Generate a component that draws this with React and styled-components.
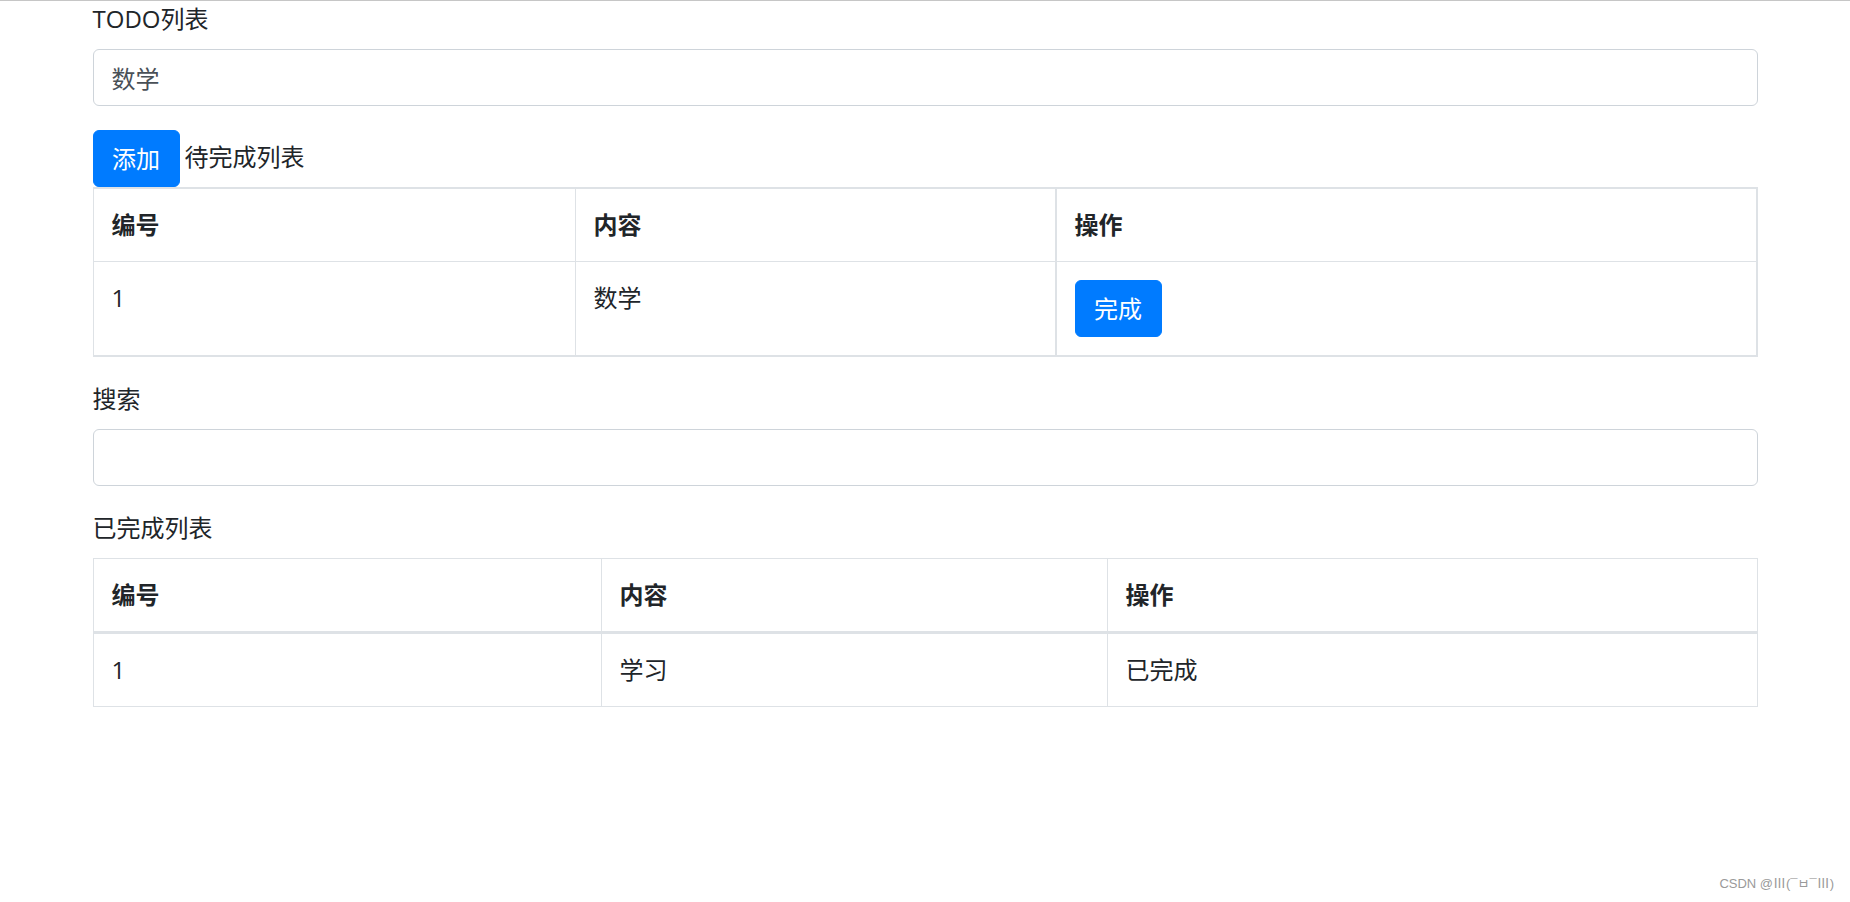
import React, { useState } from "react";
import styled, { createGlobalStyle } from "styled-components";

const GlobalStyle = createGlobalStyle`
  * { box-sizing: border-box; }
  html, body { margin: 0; padding: 0; background: #fff; }
  body {
    font-family: "Open Sans", "Noto Sans CJK SC", sans-serif;
    font-size: 24px;
    line-height: 36px;
    color: #212529;
  }
`;

const Page = styled.div`
  position: relative;
  min-height: 100vh;
  border-top: 1px solid #c6c6c6;
`;

const Container = styled.div`
  width: 1665px;
  margin: 0 auto;
`;

const Label = styled.div`
  display: block;
  margin-bottom: 12px;
  line-height: 36px;
`;

const FormGroup = styled.div`
  margin-bottom: 24px;
`;

const Input = styled.input`
  display: block;
  width: 100%;
  height: 57px;
  padding: 9px 18px;
  font-family: inherit;
  font-size: 24px;
  line-height: 36px;
  color: #495057;
  background: #fff;
  border: 1px solid #ced4da;
  border-radius: 6px;
  outline: none;
`;

const ActionRow = styled.div`
  display: flex;
  align-items: center;
  gap: 5px;
`;

const Button = styled.button`
  display: inline-block;
  height: 57px;
  padding: 0 18.5px;
  font-family: inherit;
  font-size: 24px;
  line-height: 36px;
  color: #fff;
  background: #007bff;
  border: 1px solid #007bff;
  border-radius: 6px;
  cursor: pointer;
`;

const RowTitle = styled.span`
  line-height: 36px;
  margin-top: -3px;
`;

const Table = styled.table`
  width: 100%;
  table-layout: fixed;
  border-collapse: separate;
  border-spacing: 0;
  border-top: ${(p) => p.$top}px solid #dee2e6;
  border-left: 1px solid #dee2e6;
  border-right: ${(p) => p.$right}px solid #dee2e6;
  border-bottom: ${(p) => p.$bottom}px solid #dee2e6;
  margin-bottom: 24px;
`;

const Col = styled.col`
  width: ${(p) => p.$w};
`;

const Th = styled.th`
  padding: 18px;
  text-align: left;
  vertical-align: top;
  font-weight: 700;
  line-height: 36px;
  border-bottom: ${(p) => p.$bottom}px solid #dee2e6;
  border-right: ${(p) => p.$right || 0}px solid #dee2e6;
`;

const Td = styled.td`
  padding: 18px;
  vertical-align: top;
  line-height: 36px;
  border-right: ${(p) => p.$right || 0}px solid #dee2e6;
`;

const Watermark = styled.div`
  position: absolute;
  right: 16px;
  bottom: 10px;
  font-family: "Liberation Sans", "Noto Sans CJK KR", sans-serif;
  font-size: 13px;
  line-height: 16px;
  color: #9a9a9a;
`;

export default function App() {
  const [text, setText] = useState("数学");
  const [search, setSearch] = useState("");
  const [todos, setTodos] = useState([{ id: 1, text: "数学" }]);
  const [done, setDone] = useState([{ id: 1, text: "学习" }]);

  const add = () => {
    if (!text.trim()) return;
    setTodos((t) => [...t, { id: t.length + 1, text }]);
  };
  const finish = (item) => {
    setTodos((t) => t.filter((x) => x !== item));
    setDone((d) => [...d, { id: d.length + 1, text: item.text }]);
  };
  const shownDone = done.filter((d) => d.text.includes(search));

  return (
    <Page>
      <GlobalStyle />
      <Container>
        <Label>TODO列表</Label>
        <FormGroup>
          <Input value={text} onChange={(e) => setText(e.target.value)} />
        </FormGroup>
        <ActionRow>
          <Button onClick={add}>添加</Button>
          <RowTitle>待完成列表</RowTitle>
        </ActionRow>
        <Table $top={2} $right={2} $bottom={2}>
          <colgroup>
            <Col $w="482px" />
            <Col $w="481px" />
            <Col $w="auto" />
          </colgroup>
          <thead>
            <tr>
              <Th $bottom={1} $right={1}>编号</Th>
              <Th $bottom={1} $right={2}>内容</Th>
              <Th $bottom={1}>操作</Th>
            </tr>
          </thead>
          <tbody>
            {todos.map((t) => (
              <tr key={t.id}>
                <Td $right={1}>{t.id}</Td>
                <Td $right={2}>{t.text}</Td>
                <Td>
                  <Button onClick={() => finish(t)}>完成</Button>
                </Td>
              </tr>
            ))}
          </tbody>
        </Table>
        <Label>搜索</Label>
        <FormGroup>
          <Input value={search} onChange={(e) => setSearch(e.target.value)} />
        </FormGroup>
        <Label>已完成列表</Label>
        <Table $top={1} $right={1} $bottom={1}>
          <colgroup>
            <Col $w="508px" />
            <Col $w="506px" />
            <Col $w="auto" />
          </colgroup>
          <thead>
            <tr>
              <Th $bottom={3} $right={1}>编号</Th>
              <Th $bottom={3} $right={1}>内容</Th>
              <Th $bottom={3}>操作</Th>
            </tr>
          </thead>
          <tbody>
            {shownDone.map((d) => (
              <tr key={d.id}>
                <Td $right={1}>{d.id}</Td>
                <Td $right={1}>{d.text}</Td>
                <Td>已完成</Td>
              </tr>
            ))}
          </tbody>
        </Table>
      </Container>
      <Watermark>CSDN @Ⅲ(¯ㅂ¯Ⅲ)</Watermark>
    </Page>
  );
}
